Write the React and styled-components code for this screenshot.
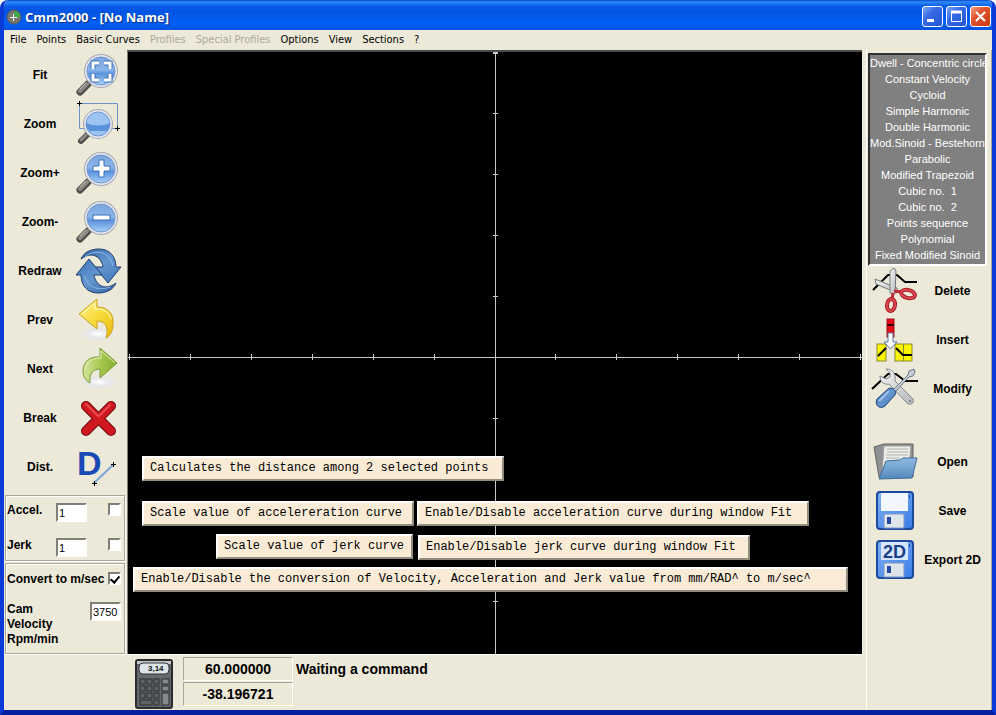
import styled, { createGlobalStyle, css } from "styled-components";

const menuItems = [
    { text: "File" },
    { text: "Points" },
    { text: "Basic Curves" },
    { text: "Profiles", off: true },
    { text: "Special Profiles", off: true },
    { text: "Options" },
    { text: "View" },
    { text: "Sections" },
    { text: "?" },
];

const curves = [
    "Dwell - Concentric circle",
    "Constant Velocity",
    "Cycloid",
    "Simple Harmonic",
    "Double Harmonic",
    "Mod.Sinoid - Bestehorn",
    "Parabolic",
    "Modified Trapezoid",
    "Cubic no.  1",
    "Cubic no.  2",
    "Points sequence",
    "Polynomial",
    "Fixed Modified Sinoid",
];

const hints = [
    { x: 14, y: 404, w: 362, text: "Calculates the distance among 2 selected points" },
    { x: 14, y: 449, w: 272, text: "Scale value of accelereration curve" },
    { x: 289, y: 449, w: 392, text: "Enable/Disable acceleration curve during window Fit" },
    { x: 88, y: 482, w: 197, text: "Scale value of jerk curve" },
    { x: 290, y: 483, w: 332, text: "Enable/Disable jerk curve during window Fit" },
    { x: 5, y: 515, w: 715, text: "Enable/Disable the conversion of Velocity, Acceleration and Jerk value from mm/RAD^ to m/sec^" },
];

/* ---------- icons ---------- */

function Defs () {
    return (
        <Hidden aria-hidden="true">
            <defs>
                <linearGradient id="lens" x1="0" y1="0" x2="0" y2="1">
                    <stop offset="0" stopColor="#7aa5de" />
                    <stop offset="0.45" stopColor="#8cb6ea" />
                    <stop offset="0.6" stopColor="#5c93dc" />
                    <stop offset="1" stopColor="#a9d2f8" />
                </linearGradient>
                <linearGradient id="blue" x1="0" y1="0" x2="1" y2="1">
                    <stop offset="0" stopColor="#2f62a4" />
                    <stop offset="0.5" stopColor="#6496d0" />
                    <stop offset="1" stopColor="#3e74b6" />
                </linearGradient>
                <linearGradient id="yellow" x1="0" y1="0" x2="1" y2="1">
                    <stop offset="0" stopColor="#fdf08a" />
                    <stop offset="0.5" stopColor="#f8dc3c" />
                    <stop offset="1" stopColor="#e8b80c" />
                </linearGradient>
                <linearGradient id="green" x1="0" y1="0" x2="1" y2="0">
                    <stop offset="0" stopColor="#d5e6a0" />
                    <stop offset="0.5" stopColor="#a8c850" />
                    <stop offset="1" stopColor="#84ac2c" />
                </linearGradient>
                <linearGradient id="folder" x1="0" y1="0" x2="0" y2="1">
                    <stop offset="0" stopColor="#8fbbe2" />
                    <stop offset="1" stopColor="#5488bc" />
                </linearGradient>
                <linearGradient id="disk" x1="0" y1="0" x2="1" y2="1">
                    <stop offset="0" stopColor="#7cb0f6" />
                    <stop offset="1" stopColor="#3c7ce8" />
                </linearGradient>
                <linearGradient id="steel" x1="0" y1="0" x2="1" y2="1">
                    <stop offset="0" stopColor="#f6f6f6" />
                    <stop offset="1" stopColor="#b4b8bc" />
                </linearGradient>
                <radialGradient id="shade">
                    <stop offset="0" stopColor="#ffffff" />
                    <stop offset="0.6" stopColor="#e6e6ea" />
                    <stop offset="1" stopColor="#ece9d8" />
                </radialGradient>
            </defs>
        </Hidden>
    )
}

function Lens ({ cx = 27, cy = 21, r = 15, children }) {
    return (
        <g>
            <path d="M14 34 L6 42" stroke="#4e4c48" strokeWidth="7" strokeLinecap="round" />
            <path d="M13 34 L6 41" stroke="#8c8a84" strokeWidth="4" strokeLinecap="round" />
            <path d="M12 33 L6 39" stroke="#c4c2bc" strokeWidth="1" />
            <circle cx={cx} cy={cy} r={r + 2} fill="#a7a9b2" />
            <circle cx={cx} cy={cy} r={r + 1} fill="#e4e7ee" />
            <circle cx={cx} cy={cy} r={r - 1} fill="url(#lens)" stroke="#7396cc" />
            {children}
        </g>
    )
}

function FitIcon () {
    const corners = "M19 19 V13 H25 M30 13 H36 V19 M36 24 V30 H30 M25 30 H19 V24";
    return (
        <Lens>
            <path d={corners} fill="none" stroke="#3d70b8" strokeWidth="5" />
            <path d={corners} fill="none" stroke="#fff" strokeWidth="3" />
        </Lens>
    )
}

function ZoomIcon () {
    return (
        <g>
            <path d="M5.500 4.500 H43.500 V29.500 H5.500 Z" fill="none" stroke="#6c94c8" />
            <path d="M13 36 L7 42" stroke="#4e4c48" strokeWidth="6" strokeLinecap="round" />
            <path d="M12 36 L7 41" stroke="#8c8a84" strokeWidth="3" strokeLinecap="round" />
            <circle cx="24" cy="25" r="15" fill="#a7a9b2" />
            <circle cx="24" cy="25" r="14" fill="#e4e7ee" />
            <circle cx="24" cy="25" r="12" fill="#9cc4f2" stroke="#7396cc" />
            <path d="M12 24 Q24 29 36 24 Q36 30 32 32 H16 Q12 29 12 24" fill="#5a92da" />
            <path d="M3 4.500 H8 M5.500 2 V7 M41 29.500 H46 M43.500 27 V32" stroke="#000" />
        </g>
    )
}

function ZoomInIcon () {
    return (
        <Lens>
            <path d="M25 12 H30 V18 H36 V23 H30 V29 H25 V23 H19 V18 H25 Z" fill="#fff" stroke="#3d70b8" />
        </Lens>
    )
}

function ZoomOutIcon () {
    return (
        <Lens>
            <rect x="19" y="18" width="17" height="5" fill="#fff" stroke="#3d70b8" />
        </Lens>
    )
}

const swoosh = "M7 13 C10 6 17 3 25 3 C36 3 42 11 42 21 L47 21 L34 37 L21 21 L29 21 C28 14 23 9 17 9 C13 9 10 11 7 13 Z";

function RedrawIcon () {
    return (
        <g fill="url(#blue)" stroke="#1f3f70" strokeLinejoin="round">
            <path d={swoosh} />
            <path d={swoosh} transform="rotate(180 24.500 25)" />
            <path d="M11 11 C18 4 35 3 39 20" fill="none" stroke="#8db8e8" />
            <path d="M11 30 C12 39 22 46 36 41" fill="none" stroke="#8db8e8" />
        </g>
    )
}

function PrevIcon () {
    return (
        <g>
            <ellipse cx="24" cy="39" rx="19" ry="7" fill="url(#shade)" />
            <path
                d="M5 19 L23 4 V12 C34 12 40 19 39 29 C39 36 36 41 32 43 C35 33 32 26 23 26 V34 Z"
                fill="url(#yellow)" stroke="#c9a21c" strokeLinejoin="round"
            />
            <path d="M8 19 L21 8 V14 C30 14 35 17 37 24" fill="none" stroke="#fffbd0" />
        </g>
    )
}

function NextIcon () {
    return (
        <g>
            <ellipse cx="25" cy="38" rx="19" ry="7" fill="url(#shade)" />
            <path
                d="M43 19 L26 4 V13 C16 12 9 18 9 27 C9 33 12 37 16 39 C15 31 18 25 26 25 V34 Z"
                fill="url(#green)" stroke="#7c9c34" strokeLinejoin="round"
            />
            <path d="M41 19 L27 7 V14 C18 14 12 18 11 26" fill="none" stroke="#e4f0b8" />
        </g>
    )
}

function BreakIcon () {
    return (
        <g strokeLinecap="round">
            <path d="M12 13 L37 38 M37 13 L12 38" stroke="#6c0a0e" strokeWidth="10" />
            <path d="M12 13 L37 38 M37 13 L12 38" stroke="#d01820" strokeWidth="8" />
            <path d="M12 11 L24 23 M25 23 L36 12" stroke="#e8484e" strokeWidth="2" />
        </g>
    )
}

function DistIcon () {
    return (
        <g>
            <Glyph x="3" y="33" $size={34} fill="#1a48b4">D</Glyph>
            <path d="M20 41 L40 22" stroke="#7ba4d4" strokeWidth="2" />
            <path d="M18 41.500 H23 M20.500 39 V44 M37 22.500 H42 M39.500 20 V25" stroke="#000" />
        </g>
    )
}

function DeleteIcon () {
    return (
        <g>
            <path d="M3 24 L18 9 H27 L35 16 H47" fill="none" stroke="#000" strokeWidth="2" />
            <path d="M5 13 L27 22 V27 L6 18 Z" fill="url(#steel)" stroke="#74787c" />
            <path d="M20 5 L24 2 L26 5 L25 28 L20 27 Z" fill="url(#steel)" stroke="#74787c" />
            <path d="M24 25 L32 26 M23 27 L22 33" stroke="#c42c34" strokeWidth="3" />
            <ellipse cx="38" cy="28" rx="7" ry="4" fill="none" stroke="#a81c28" strokeWidth="4" transform="rotate(14 38 28)" />
            <ellipse cx="38" cy="28" rx="7" ry="4" fill="none" stroke="#dc4850" strokeWidth="2" transform="rotate(14 38 28)" />
            <ellipse cx="21" cy="39" rx="4" ry="6" fill="none" stroke="#a81c28" strokeWidth="4" transform="rotate(8 21 39)" />
            <ellipse cx="21" cy="39" rx="4" ry="6" fill="none" stroke="#dc4850" strokeWidth="2" transform="rotate(8 21 39)" />
        </g>
    )
}

function InsertIcon () {
    return (
        <g>
            <rect x="17" y="4" width="7" height="18" fill="#e80c18" stroke="#a01018" />
            <path d="M17 10 H24" stroke="#300" strokeWidth="2" />
            <rect x="7" y="29" width="9" height="17" fill="#fcf400" stroke="#8a8a30" />
            <rect x="25" y="29" width="17" height="17" fill="#fcf400" stroke="#8a8a30" />
            <path d="M33.500 29 V46" stroke="#8a8a30" />
            <path d="M8 41 L16 33 M26 33 L33 40 H42" fill="none" stroke="#000" strokeWidth="2" />
            <path d="M18 18 H23 V27 H27 L20.500 34 L14 27 H18 Z" fill="#fff" stroke="#5878b0" />
        </g>
    )
}

function ModifyIcon () {
    return (
        <g>
            <path d="M2 25 L18 10 H26 L35 17 H48" fill="none" stroke="#000" strokeWidth="2" />
            <path
                d="M16 5 L20 9 V13 L16 15 L10 12 C10 18 14 21 19 20 L37 39 C40 42 45 39 43 35 L25 17 C26 10 23 5 16 5 Z"
                fill="url(#steel)" stroke="#85888c"
            />
            <circle cx="40" cy="37" r="1" fill="#777" />
            <path d="M22 27 L38 11 L39 7 L44 5 L45 8 L43 12 L39 13 L24 29 Z" fill="#c4ccd6" stroke="#6c7888" />
            <path d="M7 35 L18 25 C21 22 28 27 25 31 L15 42 C10 46 4 41 7 35 Z" fill="url(#blue)" stroke="#284878" />
            <path d="M9 37 L19 27" stroke="#a4c6ea" strokeWidth="2" />
        </g>
    )
}

function OpenIcon () {
    return (
        <g>
            <path d="M4 10 L14 7 H43 V40 H9 Z" fill="#8e9092" stroke="#606264" />
            <path d="M14 9 H41 L39 30 L12 36 Z" fill="#ecece8" stroke="#a0a09c" />
            <path d="M17 12 H38 M17 15 H38 M16 18 H38 M16 21 H30" stroke="#b0b0ac" />
            <path d="M9 42 L16 24 L30 23 L33 21 H47 L42 41 Z" fill="url(#folder)" stroke="#406c9c" strokeLinejoin="round" />
        </g>
    )
}

function SaveIcon ({ label }) {
    return (
        <g>
            <rect x="7" y="6" width="36" height="37" rx="3" fill="url(#disk)" stroke="#1c4a9c" strokeWidth="2" />
            <rect x="11" y="7" width="27" height="18" fill={label ? "#d6e6fc" : "#f2f7ff"} />
            <rect x="14" y="28" width="20" height="14" fill="#dfe3ea" stroke="#7c98c8" />
            <rect x="17" y="31" width="4" height="7" fill="#2448a4" />
            <path d="M39.500 9 V12" stroke="#1c4a9c" />
            {label && <Glyph x="13" y="23" $size={18} fill="#1a4088">{label}</Glyph>}
        </g>
    )
}

function CalcIcon () {
    return (
        <svg width="38" height="50" viewBox="0 0 38 50" aria-hidden="true">
            <rect x="1" y="1" width="36" height="48" rx="2" fill="#65686c" stroke="#2c2c2e" strokeWidth="2" />
            <rect x="2" y="2" width="34" height="3" fill="#c4c8cc" />
            <rect x="4" y="4" width="30" height="11" rx="4" fill="#dce4ea" stroke="#303438" />
            <Glyph x="13" y="12" $size={8} fill="#111">3,14</Glyph>
            {[20, 27, 34].map((y) => [5, 12, 19, 27].map((x) => (
                <rect
                    key={x + "-" + y} x={x} y={y} width={x === 27 ? 7 : 5} height={y === 34 && x === 27 ? 12 : 5}
                    fill={x === 27 ? "#85888c" : "#606366"} stroke="#2c2e30"
                />
            )))}
            <rect x="5" y="41" width="12" height="5" fill="#606366" stroke="#2c2e30" />
            <rect x="19" y="41" width="5" height="5" fill="#606366" stroke="#2c2e30" />
        </svg>
    )
}

const leftTools = [
    { text: "Fit", Icon: FitIcon },
    { text: "Zoom", Icon: ZoomIcon },
    { text: "Zoom+", Icon: ZoomInIcon },
    { text: "Zoom-", Icon: ZoomOutIcon },
    { text: "Redraw", Icon: RedrawIcon },
    { text: "Prev", Icon: PrevIcon },
    { text: "Next", Icon: NextIcon },
    { text: "Break", Icon: BreakIcon },
    { text: "Dist.", Icon: DistIcon },
];

const editTools = [
    { text: "Delete", Icon: DeleteIcon },
    { text: "Insert", Icon: InsertIcon },
    { text: "Modify", Icon: ModifyIcon },
];

const fileTools = [
    { text: "Open", Icon: OpenIcon },
    { text: "Save", Icon: SaveIcon },
    { text: "Export 2D", Icon: SaveIcon, label: "2D" },
];

function ToolButton ({ text, Icon, label, flip }) {
    return (
        <Tool type="button" $flip={flip}>
            <span>{text}</span>
            <svg width="48" height="49" viewBox="0 0 48 49" aria-hidden="true">
                <Icon label={label} />
            </svg>
        </Tool>
    )
}

function Axes () {
    const steps = [-6, -5, -4, -3, -2, -1, 1, 2, 3, 4, 5, 6];
    return (
        <Plot viewBox="-367 -305 734 602" preserveAspectRatio="xMidYMid slice">
            <path d="M-367 0.500 H367 M0.500 -305 V297" stroke="#c8c8c8" />
            {steps.map((s) => (
                <path
                    key={s} stroke="#c8c8c8"
                    d={`M${s * 61 + (s > 0 ? -0.5 : 0.5)} -3 V3 M-2 ${s * 61 + 0.5} H3`}
                />
            ))}
            <path d="M-2 -303.500 H3" stroke="#c8c8c8" />
        </Plot>
    )
}

export default function App () {
    return (
        <Window>
            <Global />
            <Defs />
            <TitleBar>
                <svg width="16" height="16" viewBox="0 0 16 16" aria-hidden="true">
                    <circle cx="8" cy="8" r="7" fill="#77786e" stroke="#5c5c58" />
                    <path d="M8 2 A6 6 0 0 1 14 8 L9 8 Z" fill="#38b048" />
                    <path d="M4 8.500 H11 M7.500 5 V12" stroke="#fff" />
                </svg>
                <Title>Cmm2000 - [No Name]</Title>
                <WinButton type="button" aria-label="Minimize">
                    <svg width="19" height="19"><rect x="4" y="12" width="7" height="3" fill="#fff" /></svg>
                </WinButton>
                <WinButton type="button" aria-label="Maximize">
                    <svg width="19" height="19">
                        <path d="M4.500 4 V14.500 H14.500 V4" fill="none" stroke="#fff" />
                        <path d="M4 5 H15" stroke="#fff" strokeWidth="3" />
                    </svg>
                </WinButton>
                <WinButton type="button" aria-label="Close" $close>
                    <svg width="19" height="19"><path d="M5 5 L14 14 M14 5 L5 14" stroke="#fff" strokeWidth="2" /></svg>
                </WinButton>
            </TitleBar>
            <Menu>
                {menuItems.map((m) => (
                    <MenuItem key={m.text} type="button" disabled={m.off}>{m.text}</MenuItem>
                ))}
            </Menu>
            <Body>
                <Work>
                    <Upper>
                        <LeftBar>
                            {leftTools.map((t) => <ToolButton key={t.text} {...t} />)}
                            <Group>
                                <Field>
                                    <label htmlFor="accel">Accel.</label>
                                    <Box id="accel" type="text" defaultValue="1" />
                                    <Check type="checkbox" aria-label="Acceleration curve in Fit" />
                                </Field>
                                <Field>
                                    <label htmlFor="jerk">Jerk</label>
                                    <Box id="jerk" type="text" defaultValue="1" />
                                    <Check type="checkbox" aria-label="Jerk curve in Fit" />
                                </Field>
                            </Group>
                            <Group $last>
                                <Convert>
                                    Convert to m/sec
                                    <Check type="checkbox" defaultChecked />
                                </Convert>
                                <Velocity>
                                    <label htmlFor="cam">Cam Velocity Rpm/min</label>
                                    <Box id="cam" type="text" defaultValue="3750" />
                                </Velocity>
                            </Group>
                        </LeftBar>
                        <Canvas>
                            <Axes />
                            {hints.map((h) => (
                                <Hint key={h.text} role="tooltip" $x={h.x} $y={h.y} $w={h.w}>{h.text}</Hint>
                            ))}
                        </Canvas>
                    </Upper>
                    <Status>
                        <CalcButton type="button" aria-label="Calculator"><CalcIcon /></CalcButton>
                        <Coords>
                            <Coord>60.000000</Coord>
                            <Coord>-38.196721</Coord>
                        </Coords>
                        <Message>Waiting a command</Message>
                    </Status>
                </Work>
                <RightBar>
                    <CurveList>
                        {curves.map((c) => <li key={c}><Curve type="button">{c}</Curve></li>)}
                    </CurveList>
                    {editTools.map((t) => <ToolButton key={t.text} flip {...t} />)}
                    <Gap />
                    {fileTools.map((t) => <ToolButton key={t.text} flip {...t} />)}
                </RightBar>
            </Body>
        </Window>
    )
}

const Global = createGlobalStyle`
    * {
        box-sizing: border-box;
    }

    body {
        margin: 0;
        background: #fff;
        font-family: "Liberation Sans", Arial, sans-serif;
        font-size: 12px;
        color: #000;
    }

    button {
        font: inherit;
        color: inherit;
        background: none;
        border: none;
        padding: 0;
    }
`

const sunken = css`
    border: 2px solid;
    border-color: #808078 #fff #fff #808078;
`

const Hidden = styled.svg`
    position: absolute;
    width: 0;
    height: 0;
`

const Glyph = styled.text`
    font-family: "Liberation Sans", Arial, sans-serif;
    font-weight: bold;
    font-size: ${(p) => p.$size}px;
`

const Window = styled.div`
    display: flex;
    flex-direction: column;
    min-height: 100vh;
    background: #ece9d8;
    border: solid #0a3ad8;
    border-width: 0 4px 5px;
    border-bottom-color: #0420a0;
    border-radius: 8px 8px 0 0;
    overflow: hidden;
`

const TitleBar = styled.header`
    display: flex;
    align-items: center;
    gap: 2px;
    height: 30px;
    margin: 0 -4px;
    padding: 3px 5px 0 6px;
    background: linear-gradient(#0a4ad0 0, #2f8cf8 2px, #0a5ce8 6px, #0054e3 12px, #0060f8 24px, #0a50dc 30px);
`

const Title = styled.h1`
    flex: 1;
    margin: 0;
    padding-left: 1px;
    font-family: "Open Sans", sans-serif;
    font-size: 13px;
    font-weight: bold;
    color: #fff;
    text-shadow: 1px 1px 1px #0a2a80;
`

const WinButton = styled.button`
    width: 21px;
    height: 21px;
    border: 1px solid #fff;
    border-radius: 3px;
    background: ${(p) => p.$close
        ? "linear-gradient(135deg, #f0a088, #e0502c 40%, #c83c14)"
        : "linear-gradient(135deg, #7ca8f8, #3468e4 40%, #2858d4)"};

    & + & {
        margin-left: 1px;
    }

    svg {
        display: block;
    }
`

const Menu = styled.nav`
    display: flex;
    align-items: center;
    gap: 10px;
    height: 20px;
    padding: 0 0 2px 6px;
    font-family: "DejaVu Sans Condensed", "DejaVu Sans", sans-serif;
    font-size: 11px;
`

const MenuItem = styled.button`
    &:disabled {
        color: #aca899;
    }
`

const Body = styled.div`
    display: flex;
    flex: 1;
`

const Work = styled.div`
    display: flex;
    flex-direction: column;
    flex: 1;
`

const Upper = styled.div`
    display: flex;
    flex: 1;
`

const LeftBar = styled.aside`
    display: flex;
    flex-direction: column;
    width: 123px;
`

const Tool = styled.button`
    display: flex;
    flex-direction: ${(p) => p.$flip ? "row-reverse" : "row"};
    align-items: center;
    width: 100%;
    height: 49px;
    padding: ${(p) => p.$flip ? "0 4px 0 2px" : "0 5px 0 2px"};
    font-weight: bold;

    span {
        flex: 1;
        text-align: center;
        white-space: nowrap;
    }

    svg {
        flex: none;
        display: block;
    }
`

const Group = styled.div`
    margin: ${(p) => p.$last ? "2px 2px 0 1px" : "4px 2px 0 1px"};
    padding: ${(p) => p.$last ? "7px 3px 0 1px" : "6px 3px 0 1px"};
    height: ${(p) => p.$last ? "auto" : "66px"};
    flex: ${(p) => p.$last ? "1" : "none"};
    border: 1px solid #a8a698;
    box-shadow: inset 1px 1px #fff, 1px 1px #fff;
    font-weight: bold;
`

const Field = styled.div`
    display: flex;
    align-items: flex-start;
    height: 35px;

    label {
        width: 49px;
        line-height: 16px;
    }

    input[type="checkbox"] {
        margin-left: auto;
    }
`

const Box = styled.input`
    ${sunken}
    width: 31px;
    height: 19px;
    margin: 1px 0 0;
    padding: 0 1px;
    background: #fff;
    font-family: "Liberation Sans", Arial, sans-serif;
    font-size: 11px;
    color: #000;
    outline: none;
`

const Check = styled.input`
    ${sunken}
    appearance: none;
    display: grid;
    place-content: center;
    flex: none;
    width: 13px;
    height: 13px;
    margin: 1px 0 0;
    background: #fff;

    &:checked::after {
        content: "";
        width: 4px;
        height: 7px;
        border: solid #000;
        border-width: 0 2px 2px 0;
        transform: rotate(40deg);
    }
`

const Convert = styled.label`
    display: flex;
    justify-content: space-between;
    line-height: 16px;
    white-space: nowrap;
`

const Velocity = styled.div`
    display: flex;
    justify-content: space-between;
    align-items: flex-start;
    padding-top: 15px;

    label {
        width: 60px;
        line-height: 15px;
    }

    input {
        margin: 0;
    }
`

const Canvas = styled.main`
    position: relative;
    flex: 1;
    min-width: 0;
    border: solid #808078;
    border-width: 2px 0 0 1px;
    border-top-color: #4c4c48;
    background: #000;
    overflow: hidden;
`

const Plot = styled.svg`
    position: absolute;
    inset: 0;
    width: 100%;
    height: 100%;
`

const Hint = styled.div`
    position: absolute;
    left: ${(p) => p.$x}px;
    top: ${(p) => p.$y}px;
    width: ${(p) => p.$w}px;
    height: 25px;
    padding-left: 6px;
    border: 2px solid;
    border-color: #fff #908c80 #908c80 #fff;
    background: #faebd7;
    font-family: "Liberation Mono", "Courier New", monospace;
    font-size: 12px;
    line-height: 20px;
    white-space: nowrap;
`

const Status = styled.footer`
    display: flex;
    height: 56px;
    padding: 2px 0 0 131px;
    border-top: 1px solid #fff;
    font-size: 14px;
    font-weight: bold;
`

const CalcButton = styled.button`
    align-self: center;
    margin-right: 10px;

    svg {
        display: block;
    }
`

const Coords = styled.div`
    display: flex;
    flex-direction: column;
    gap: 1px;
    width: 110px;
`

const Coord = styled.output`
    height: 24px;
    border: 1px solid;
    border-color: #a8a698 #fff #fff #a8a698;
    line-height: 22px;
    text-align: center;
`

const Message = styled.p`
    margin: 0 0 0 3px;
    line-height: 24px;
`

const RightBar = styled.aside`
    width: 126px;
    margin-left: 4px;
    padding: 3px 0 0 1px;
    border-right: 1px solid #a8a698;
    border-left: 1px solid #fff;
`

const CurveList = styled.ul`
    ${sunken}
    margin: 0 4px 0 0;
    padding: 0 0 1px;
    border-color: #303030 #fff #fff #303030;
    background: #808080;
    list-style: none;
    color: #fff;
    font-family: "Liberation Sans", Arial, sans-serif;
    font-size: 11px;
    line-height: 16px;
`

const Curve = styled.button`
    display: block;
    width: 100%;
    height: 16px;
    text-align: center;
    white-space: pre;
`

const Gap = styled.div`
    height: 24px;
`
